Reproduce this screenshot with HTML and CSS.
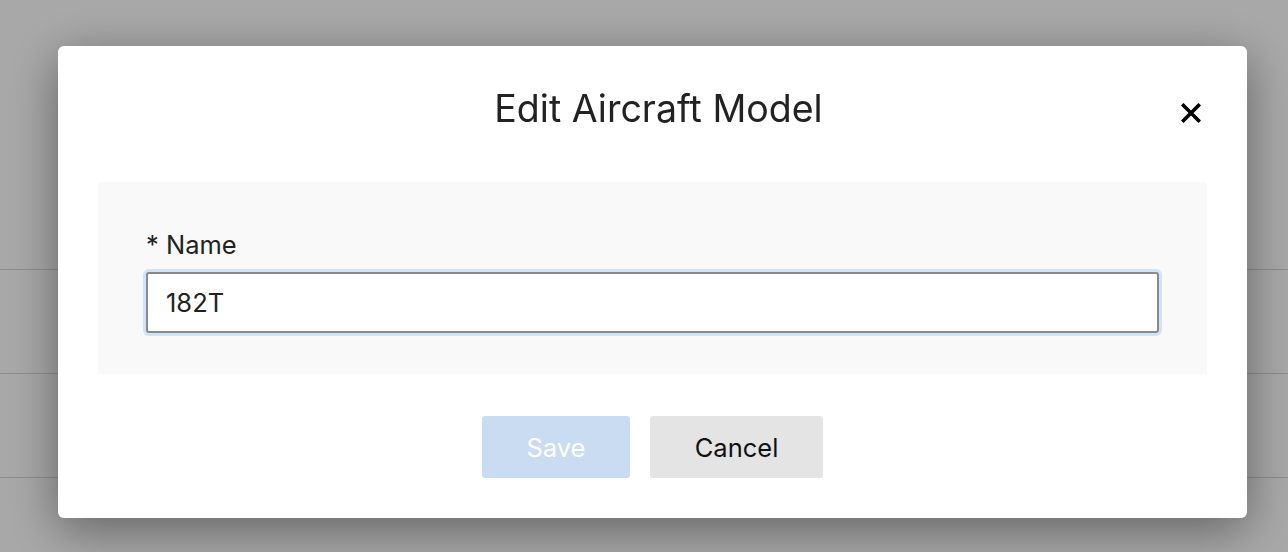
FILE: index.html
```html
<!DOCTYPE html>
<html lang="en">
<head>
<meta charset="utf-8">
<title>Edit Aircraft Model</title>
<link rel="stylesheet" href="styles.css">
</head>
<body>
<div class="page">
  <div class="row"></div>
  <div class="row"></div>
  <div class="row"></div>
</div>
<div class="overlay">
  <div class="modal" role="dialog" aria-labelledby="modal-title">
    <div class="modal-header">
      <h2 class="modal-title" id="modal-title">Edit Aircraft Model</h2>
      <button class="close-btn" aria-label="Close">
        <svg width="20" height="20" viewBox="0 0 20 20"><path d="M2.5 2.5 L17.5 17.5 M17.5 2.5 L2.5 17.5" stroke="#000" stroke-width="3.6" stroke-linecap="square" fill="none"/></svg>
      </button>
    </div>
    <div class="modal-body">
      <label class="field-label" for="name">* Name</label>
      <input class="field-input" id="name" type="text" value="182T">
    </div>
    <div class="modal-footer">
      <button class="btn btn-save" disabled>Save</button>
      <button class="btn btn-cancel">Cancel</button>
    </div>
  </div>
</div>
</body>
</html>
```
FILE: styles.css
```css
* { box-sizing: border-box; }
html, body { margin: 0; padding: 0; }
body {
  width: 1288px;
  height: 552px;
  overflow: hidden;
  background: #ffffff;
  font-family: Inter, Roboto, "Noto Sans", sans-serif;
}
.page {
  height: 552px;
  overflow: hidden;
  padding-top: 269px;
}
.row {
  height: 104px;
  border-top: 1px solid #d8d8d8;
}
.overlay {
  position: fixed;
  inset: 0;
  background: rgba(0, 0, 0, 0.34);
  padding-top: 46px;
  padding-left: 58px;
}
.modal {
  width: 1189px;
  height: 472px;
  background: #ffffff;
  border-radius: 6px;
  box-shadow: 0 12px 50px rgba(0, 0, 0, 0.42);
  padding: 0 40px 40px;
  display: flex;
  flex-direction: column;
}
.modal-header {
  height: 136px;
  display: flex;
  align-items: center;
  justify-content: center;
  position: relative;
  padding-left: 12px;
}
.modal-title {
  margin: 0;
  font-size: 37.5px;
  font-weight: 400;
  color: #222222;
  line-height: 44px;
  padding-bottom: 10px;
}
.close-btn {
  position: absolute;
  right: 6px;
  top: 57px;
  width: 20px;
  height: 20px;
  padding: 0;
  border: 0;
  background: none;
  display: block;
}
.close-btn svg { display: block; }
.modal-body {
  background: #f9f9f9;
  height: 192px;
  padding: 48px 48px 0;
  display: flex;
  flex-direction: column;
}
.field-label {
  font-size: 25.5px;
  line-height: 30px;
  color: #222222;
  margin-bottom: 12px;
}
.field-input {
  width: 100%;
  height: 61px;
  border: 2px solid #8a8a8a;
  border-radius: 3px;
  box-shadow: 0 0 0 3px #cfe4f8;
  padding: 0 18px;
  font-family: Inter, Roboto, "Noto Sans", sans-serif;
  font-size: 25.5px;
  color: #222222;
  background: #ffffff;
  outline: none;
}
.modal-footer {
  display: flex;
  justify-content: center;
  gap: 20px;
  margin-top: 42px;
}
.btn {
  height: 62px;
  border: 0;
  border-radius: 3px;
  font-family: Inter, Roboto, "Noto Sans", sans-serif;
  font-size: 25.5px;
  padding: 0;
}
.btn-save {
  width: 148px;
  background: #c9dcf2;
  color: #ffffff;
}
.btn-cancel {
  width: 173px;
  background: #e4e4e4;
  color: #111111;
}
```
